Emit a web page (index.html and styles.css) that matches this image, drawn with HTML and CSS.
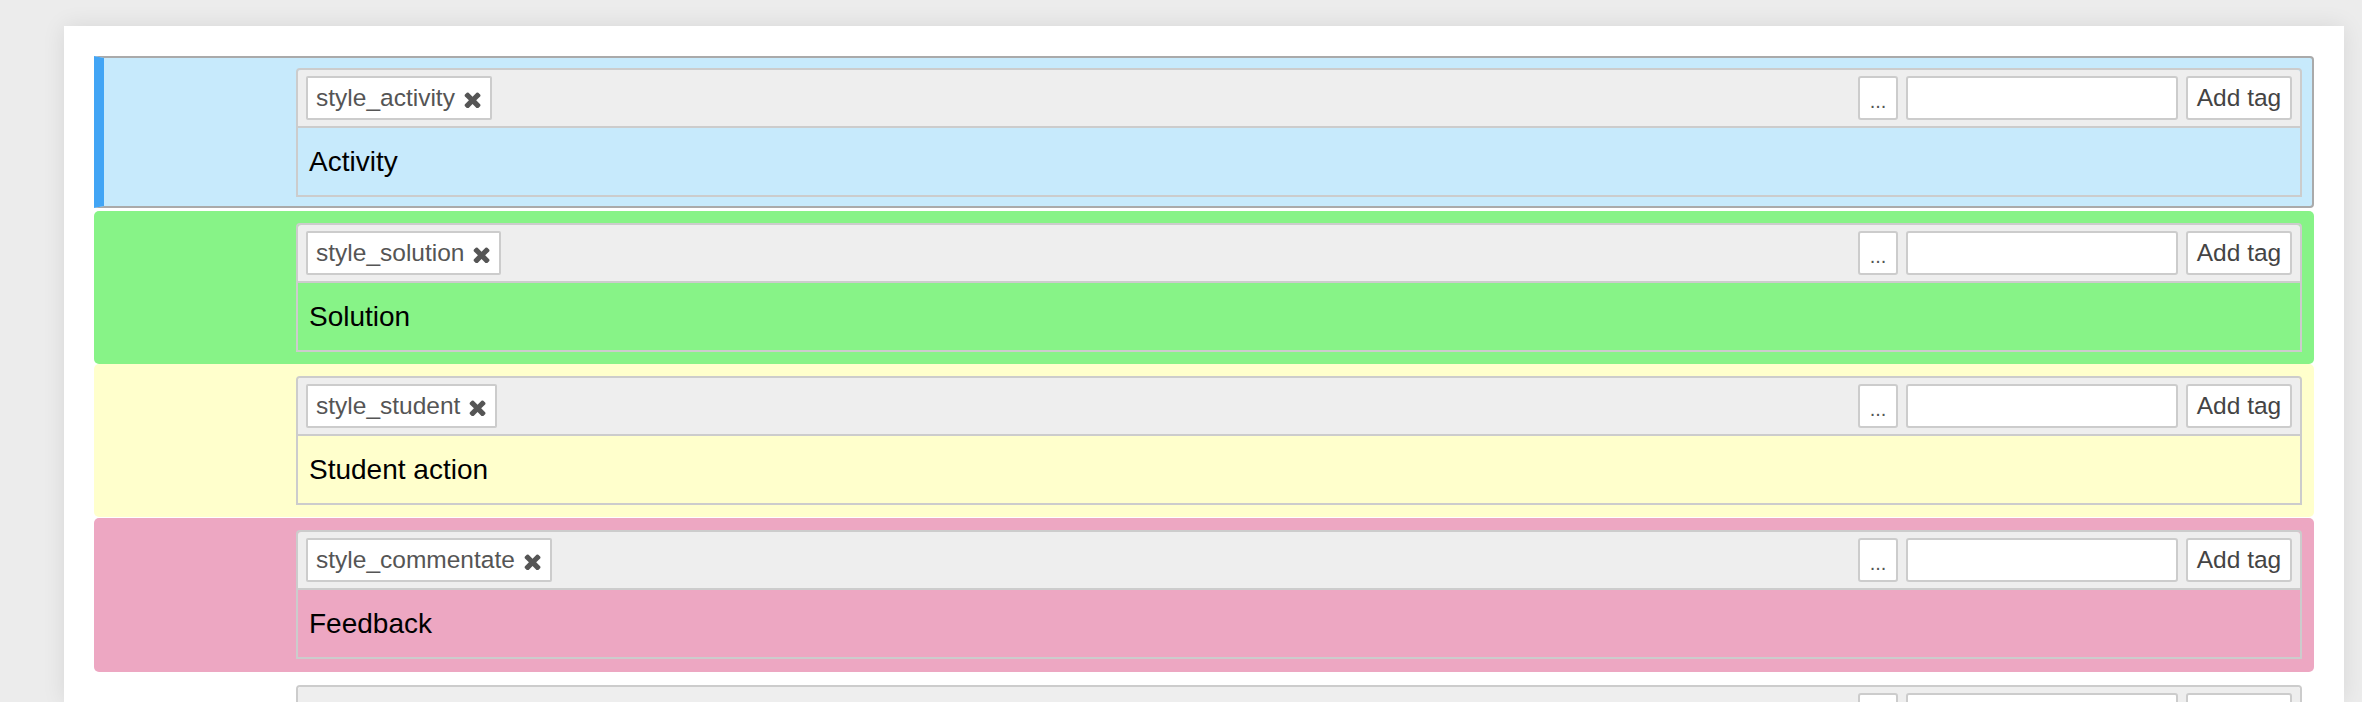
FILE: index.html
```html
<!DOCTYPE html>
<html>
<head>
<meta charset="utf-8">
<title>Tag styles</title>
<link rel="stylesheet" href="styles.css">
</head>
<body>
<div class="panel">
  <div class="row row-blue selected">
    <div class="card">
      <div class="card-head">
        <span class="chip">style_activity <svg class="x" viewBox="100 260 1200 1270"><path d="M1298 1322q0 40-28 68l-136 136q-28 28-68 28t-68-28l-294-294-294 294q-28 28-68 28t-68-28l-136-136q-28-28-28-68t28-68l294-294-294-294q-28-28-28-68t28-68l136-136q28-28 68-28t68 28l294 294 294-294q28-28 68-28t68 28l136 136q28 28 28 68t-28 68l-294 294 294 294q28 28 28 68z"/></svg></span>
        <div class="tools"><button class="btn dots">...</button><input class="field" type="text"><button class="btn add">Add tag</button></div>
      </div>
      <div class="card-body">Activity</div>
    </div>
  </div>
  <div class="row row-green">
    <div class="card">
      <div class="card-head">
        <span class="chip">style_solution <svg class="x" viewBox="100 260 1200 1270"><path d="M1298 1322q0 40-28 68l-136 136q-28 28-68 28t-68-28l-294-294-294 294q-28 28-68 28t-68-28l-136-136q-28-28-28-68t28-68l294-294-294-294q-28-28-28-68t28-68l136-136q28-28 68-28t68 28l294 294 294-294q28-28 68-28t68 28l136 136q28 28 28 68t-28 68l-294 294 294 294q28 28 28 68z"/></svg></span>
        <div class="tools"><button class="btn dots">...</button><input class="field" type="text"><button class="btn add">Add tag</button></div>
      </div>
      <div class="card-body">Solution</div>
    </div>
  </div>
  <div class="row row-yellow">
    <div class="card">
      <div class="card-head">
        <span class="chip">style_student <svg class="x" viewBox="100 260 1200 1270"><path d="M1298 1322q0 40-28 68l-136 136q-28 28-68 28t-68-28l-294-294-294 294q-28 28-68 28t-68-28l-136-136q-28-28-28-68t28-68l294-294-294-294q-28-28-28-68t28-68l136-136q28-28 68-28t68 28l294 294 294-294q28-28 68-28t68 28l136 136q28 28 28 68t-28 68l-294 294 294 294q28 28 28 68z"/></svg></span>
        <div class="tools"><button class="btn dots">...</button><input class="field" type="text"><button class="btn add">Add tag</button></div>
      </div>
      <div class="card-body">Student action</div>
    </div>
  </div>
  <div class="row row-pink">
    <div class="card">
      <div class="card-head">
        <span class="chip">style_commentate <svg class="x" viewBox="100 260 1200 1270"><path d="M1298 1322q0 40-28 68l-136 136q-28 28-68 28t-68-28l-294-294-294 294q-28 28-68 28t-68-28l-136-136q-28-28-28-68t28-68l294-294-294-294q-28-28-28-68t28-68l136-136q28-28 68-28t68 28l294 294 294-294q28-28 68-28t68 28l136 136q28 28 28 68t-28 68l-294 294 294 294q28 28 28 68z"/></svg></span>
        <div class="tools"><button class="btn dots">...</button><input class="field" type="text"><button class="btn add">Add tag</button></div>
      </div>
      <div class="card-body">Feedback</div>
    </div>
  </div>
  <div class="row row-plain">
    <div class="card">
      <div class="card-head">
        <div class="tools"><button class="btn dots">...</button><input class="field" type="text"><button class="btn add">Add tag</button></div>
      </div>
      <div class="card-body"></div>
    </div>
  </div>
</div>
</body>
</html>
```
FILE: styles.css
```css
html, body {
  margin: 0;
  padding: 0;
  height: 702px;
  overflow: hidden;
}
body {
  background: #ececec;
  font-family: "Liberation Sans", Arial, Helvetica, sans-serif;
  padding: 26px 18px 0 64px;
  box-sizing: border-box;
}
.panel {
  background: #fff;
  height: 100%;
  padding: 30px 30px 0 30px;
  box-sizing: border-box;
  box-shadow: 0 0 22px rgba(0, 0, 0, 0.09);
}
.row {
  display: flex;
  padding: 12px 12px 12px 202px;
  border-radius: 5px;
}
.row.selected {
  border: 2px solid #aaaaaa;
  border-left: 10px solid #42a5f5;
  border-radius: 0 4px 4px 0;
  padding: 10px 10px 9px 192px;
  margin-bottom: 3px;
}
.row-blue { background: #c7eafc; }
.row-green { background: #87f387; }
.row-yellow { background: #ffffcc; }
.row-pink { background: #eda7c2; padding-bottom: 13px; margin-top: 1px; }
.row-plain { background: transparent; padding-top: 13px; }
.card {
  flex: 1;
  border: 2px solid #cccccc;
  border-radius: 4px 4px 0 0;
}
.card-head {
  display: flex;
  align-items: center;
  background: #eeeeee;
  padding: 6px 8px;
  border-bottom: 2px solid #cccccc;
  border-radius: 3px 3px 0 0;
}
.chip {
  display: inline-flex;
  align-items: center;
  gap: 9px;
  height: 44px;
  box-sizing: border-box;
  padding: 0 9px 0 8px;
  background: #fff;
  border: 2px solid #cccccc;
  border-radius: 2px;
  font-size: 24.5px;
  color: #555555;
}
.x {
  width: 17px;
  height: 17px;
  fill: #555555;
  margin-top: 2px;
}
.tools {
  margin-left: auto;
  display: flex;
  gap: 8px;
}
.btn {
  height: 44px;
  box-sizing: border-box;
  background: #fff;
  border: 2px solid #cccccc;
  border-radius: 3px;
  font-family: "Liberation Sans", Arial, Helvetica, sans-serif;
  font-size: 24.5px;
  color: #444444;
  padding: 0 8px;
  margin: 0;
}
.dots {
  width: 40px;
  padding: 0;
  font-size: 20px;
  color: #555555;
  padding-top: 6px;
}
.add {
  width: 106px;
  padding: 0;
}
.field {
  width: 272px;
  height: 44px;
  box-sizing: border-box;
  border: 2px solid #cccccc;
  border-radius: 3px;
  background: #fff;
  margin: 0;
  padding: 0 8px;
  font-size: 24px;
}
.card-body {
  height: 67px;
  display: flex;
  align-items: center;
  padding: 0 11px;
  font-size: 28px;
  color: #000;
}
```
